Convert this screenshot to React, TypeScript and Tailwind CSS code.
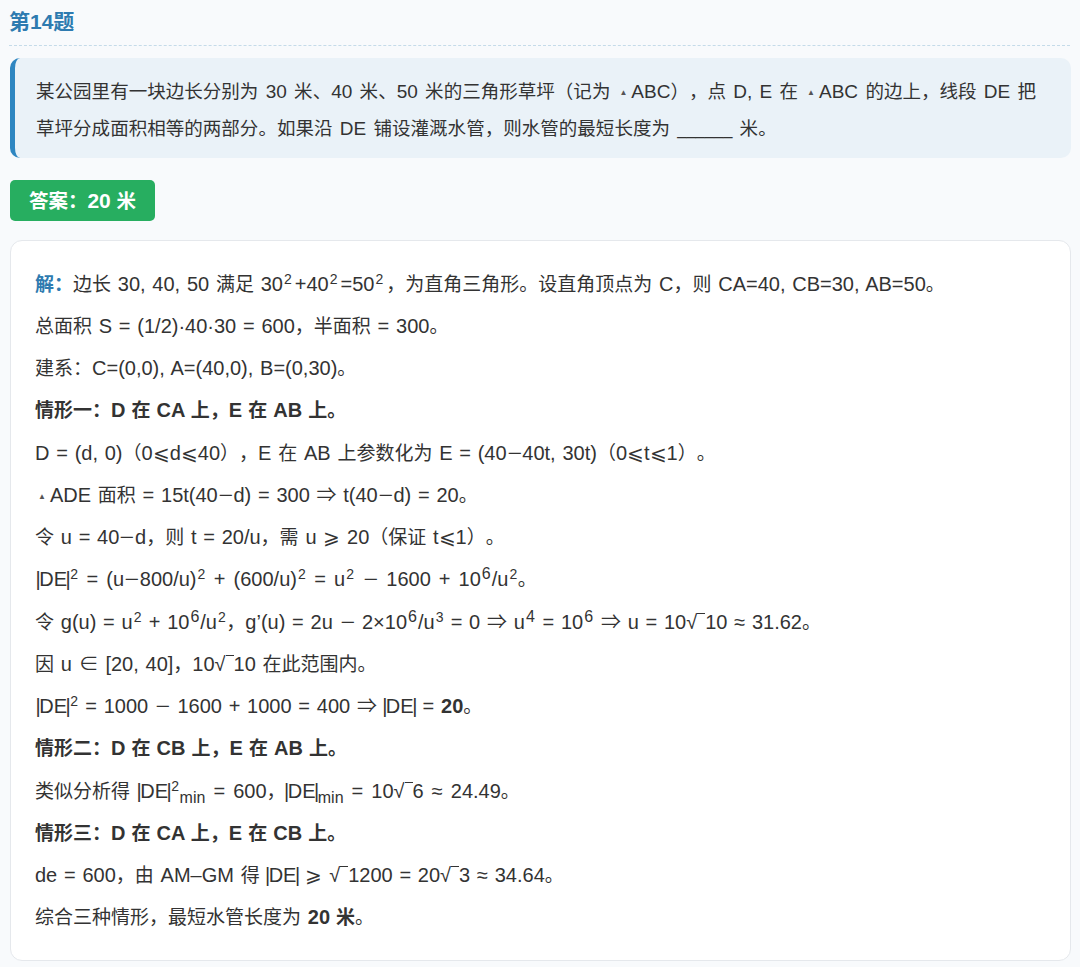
import React from "react";

const CJK = /([\u4e00-\u9fff\u3000-\u303f\uff00-\uffef]+)/;

const Latin = ({ s }: { s: string }) => (
  <>
    {s.split(/([−|])/).map((p, i) =>
      p === "−" ? (
        <span key={i} className="inline-block scale-x-[1.25] mx-[2px]">−</span>
      ) : p === "|" ? (
        <span key={i} className="mx-[-1.5px]">|</span>
      ) : (
        <React.Fragment key={i}>{p}</React.Fragment>
      )
    )}
  </>
);

const Mix = ({ s, latin = "text-[20px]" }: { s: string; latin?: string }) => (
  <>
    {s.split(CJK).map((part, i) =>
      i % 2 === 1 ? (
        <span key={i}>{part}</span>
      ) : (
        <span key={i} className={latin}><Latin s={part} /></span>
      )
    )}
  </>
);

const Tri = ({ card }: { card?: boolean }) => (
  <span className={card ? "text-[8px] text-[#555] align-[3px] pl-[3px] pr-[4px]" : "text-[8px] text-[#555] align-[3px] pl-[9px] pr-[4px]"}>▲</span>
);
const Sup = ({ children, big, wide }: { children: React.ReactNode; big?: boolean; wide?: boolean }) => (
  <span
    className={
      big
        ? "text-[16px] leading-none align-[7px] mx-[1px]"
        : wide
        ? "text-[14px] leading-none align-[7px] ml-[1px] mr-[3px]"
        : "text-[14px] leading-none align-[7px] ml-[1px] mr-[0.5px]"
    }
  >
    {children}
  </span>
);
const Sub = ({ children }: { children: React.ReactNode }) => (
  <span className="text-[16px] leading-none align-[-5px]">{children}</span>
);
const Sq = () => (
  <span className="text-[20px]">√<span className="inline-block w-[8px] border-t border-[#333] align-[15px]" /></span>
);

const Line = ({ children, roomy, inset }: { children: React.ReactNode; roomy?: boolean; inset?: boolean }) => (
  <p
    className={
      (roomy
        ? "h-[32px] leading-[32px] mb-[10.27px] whitespace-nowrap [word-spacing:2.5px]"
        : "h-[32px] leading-[32px] mb-[10.27px] whitespace-nowrap [word-spacing:1.2px]") + (inset ? " pl-[2px]" : "")
    }
  >
    {React.Children.map(children, (c) => (typeof c === "string" ? <Mix s={c} /> : c))}
  </p>
);
const B = ({ s }: { s: string }) => <strong className="[word-spacing:0.5px]"><Mix s={s} /></strong>;

export default function App() {
  return (
    <div className="min-h-[967px] bg-[#f8fafc] px-[10px] text-[19px] text-[#333333] font-['Liberation_Sans','Noto_Sans_CJK_SC',sans-serif] overflow-hidden [text-spacing-trim:space-all]">
      <h2 className="h-[46px] pt-[8px] -ml-px text-[21px] leading-[27px] font-bold text-[#2e7bb0] border-b border-dashed border-[#c5dbe9]">第14题</h2>
      <div className="mt-[12px] h-[100px] w-[1061px] rounded-[10px] border-l-[5px] border-[#2e86c1] bg-[#eaf2f8] pl-[21px] pt-[16px] leading-[36px] text-[18.55px] [word-spacing:2px]">
        <p className="whitespace-nowrap">
          <Mix latin="text-[19px]" s="某公园里有一块边长分别为 30 米、40 米、50 米的三角形草坪（记为" /><Tri /><Mix latin="text-[19px]" s="ABC），点 D, E 在" /><Tri /><Mix latin="text-[19px]" s="ABC 的边上，线段 DE 把" />
        </p>
        <p className="whitespace-nowrap">
          <Mix latin="text-[19px]" s="草坪分成面积相等的两部分。如果沿 DE 铺设灌溉水管，则水管的最短长度为 " /><span className="text-[16.5px]">______</span><Mix latin="text-[19px]" s=" 米。" />
        </p>
      </div>
      <div className="mt-[22px] flex h-[41px] w-[145px] items-center justify-center rounded-[5px] bg-[#27ae60] text-[19.5px] font-bold text-white">
        <span><Mix latin="text-[21px]" s="答案：20 米" /></span>
      </div>
      <div className="mt-[19px] h-[721px] w-[1061px] rounded-[12px] border border-[#e5e8ec] bg-white px-[24px] pt-[26.5px]">
        <Line><strong className="text-[#2e7bb0]">解：</strong>边长 30, 40, 50 满足 30<Sup wide>2</Sup>+40<Sup wide>2</Sup>=50<Sup wide>2</Sup>，为直角三角形。设直角顶点为 C，则 CA=40, CB=30, AB=50。</Line>
        <Line>总面积 S = (1/2)·40·30 = 600，半面积 = 300。</Line>
        <Line>建系：C=(0,0), A=(40,0), B=(0,30)。</Line>
        <Line><B s="情形一：D 在 CA 上，E 在 AB 上。" /></Line>
        <Line>D = (d, 0)（0⩽d⩽40），E 在 AB 上参数化为 E = (40−40t, 30t)（0⩽t⩽1）。</Line>
        <Line><Tri card />ADE 面积 = 15t(40−d) = 300 ⇒ t(40−d) = 20。</Line>
        <Line>令 u = 40−d，则 t = 20/u，需 u ⩾ 20（保证 t⩽1）。</Line>
        <Line roomy inset>|DE|<Sup>2</Sup> = (u−800/u)<Sup>2</Sup> + (600/u)<Sup>2</Sup> = u<Sup>2</Sup> − 1600 + 10<Sup big>6</Sup>/u<Sup>2</Sup>。</Line>
        <Line>令 g(u) = u<Sup>2</Sup> + 10<Sup big>6</Sup>/u<Sup>2</Sup>，g’(u) = 2u − 2×10<Sup big>6</Sup>/u<Sup>3</Sup> = 0 ⇒ u<Sup big>4</Sup> = 10<Sup big>6</Sup> ⇒ u = 10<Sq />10 ≈ 31.62。</Line>
        <Line>因 u ∈ [20, 40]，10<Sq />10 在此范围内。</Line>
        <Line inset>|DE|<Sup>2</Sup> = 1000 − 1600 + 1000 = 400 ⇒ |DE| = <B s="20" />。</Line>
        <Line><B s="情形二：D 在 CB 上，E 在 AB 上。" /></Line>
        <Line roomy>类似分析得 |DE|<Sup>2</Sup><Sub>min</Sub> = 600，|DE|<Sub>min</Sub> = 10<Sq />6 ≈ 24.49。</Line>
        <Line><B s="情形三：D 在 CA 上，E 在 CB 上。" /></Line>
        <Line>de = 600，由 AM–GM 得 |DE| ⩾ <Sq />1200 = 20<Sq />3 ≈ 34.64。</Line>
        <Line>综合三种情形，最短水管长度为 <B s="20 米" />。</Line>
      </div>
    </div>
  );
}
